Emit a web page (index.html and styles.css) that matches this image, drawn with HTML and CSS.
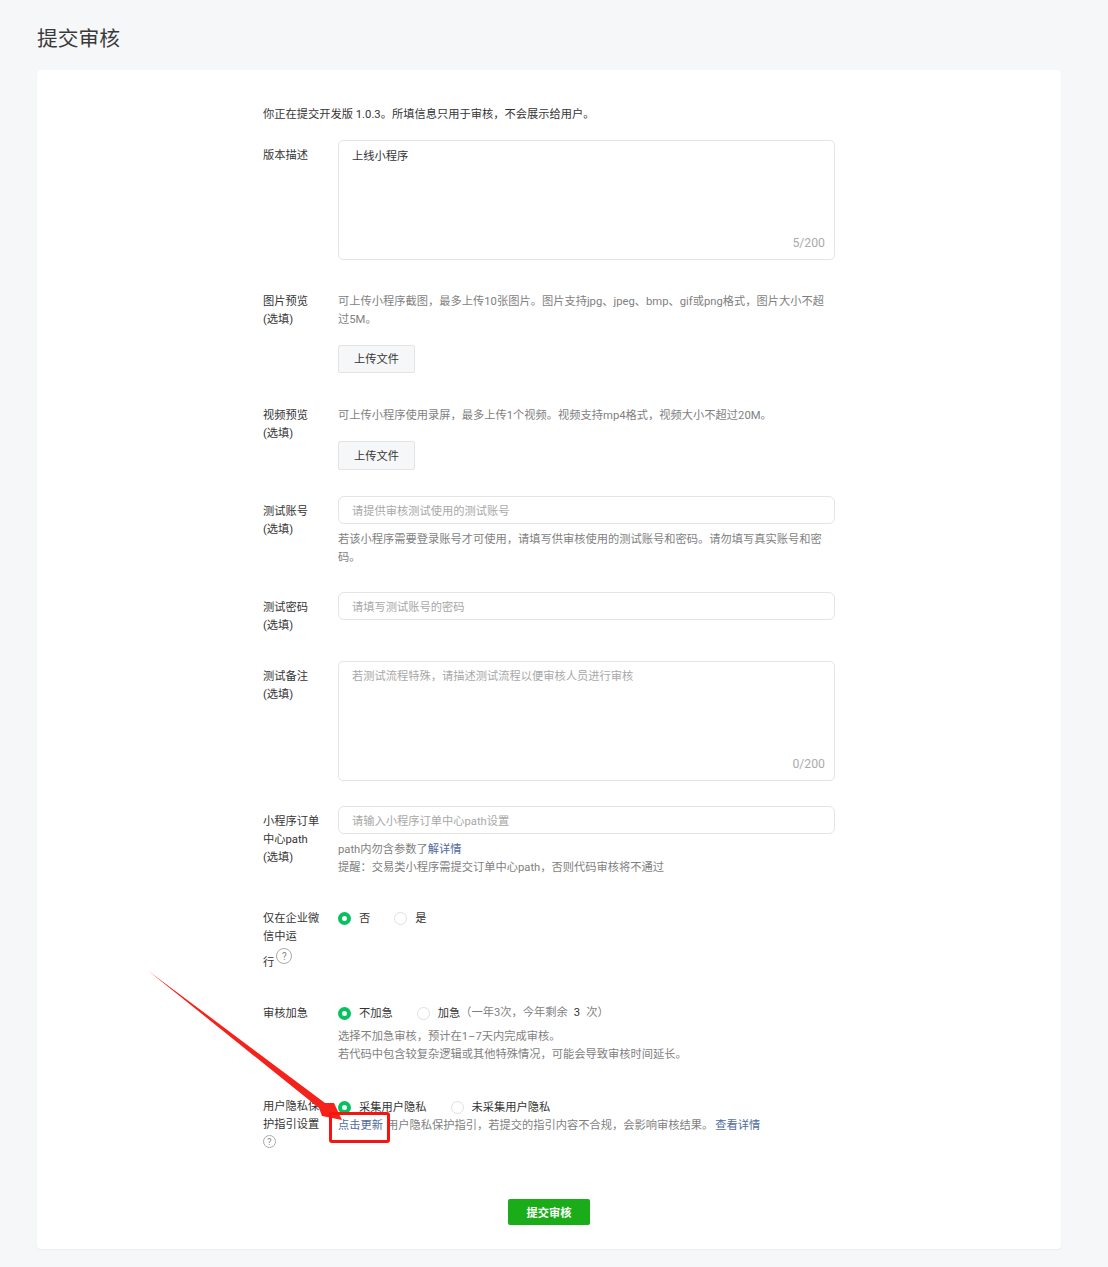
FILE: index.html
```html
<!DOCTYPE html>
<html lang="zh-CN">
<head>
    <meta charset="UTF-8">
    <title>提交审核</title>
    <link rel="stylesheet" href="styles.css">
</head>
<body>
    <h1 class="page-title">提交审核</h1>

    <div class="card">
        <form class="form">
            <p class="intro">你正在提交开发版 1.0.3。所填信息只用于审核，不会展示给用户。</p>

            <div class="row">
                <label class="label label-field">版本描述</label>
                <div class="control">
                    <div class="area-box">
                        <textarea class="area">上线小程序</textarea>
                        <span class="counter">5/200</span>
                    </div>
                </div>
            </div>

            <div class="row row-image">
                <label class="label">图片预览<br>(选填)</label>
                <div class="control">
                    <p class="hint">可上传小程序截图，最多上传10张图片。图片支持jpg、jpeg、bmp、gif或png格式，图片大小不超过5M。</p>
                    <button type="button" class="upload upload-image">上传文件</button>
                </div>
            </div>

            <div class="row row-tight">
                <label class="label">视频预览<br>(选填)</label>
                <div class="control">
                    <p class="hint">可上传小程序使用录屏，最多上传1个视频。视频支持mp4格式，视频大小不超过20M。</p>
                    <button type="button" class="upload upload-video">上传文件</button>
                </div>
            </div>

            <div class="row row-tight">
                <label class="label label-field">测试账号<br>(选填)</label>
                <div class="control">
                    <input class="input" type="text" placeholder="请提供审核测试使用的测试账号">
                    <p class="hint hint-below">若该小程序需要登录账号才可使用，请填写供审核使用的测试账号和密码。请勿填写真实账号和密码。</p>
                </div>
            </div>

            <div class="row row-password">
                <label class="label label-field">测试密码<br>(选填)</label>
                <div class="control">
                    <input class="input" type="text" placeholder="请填写测试账号的密码">
                </div>
            </div>

            <div class="row row-notes">
                <label class="label label-field">测试备注<br>(选填)</label>
                <div class="control">
                    <div class="area-box">
                        <textarea class="area area-notes" placeholder="若测试流程特殊，请描述测试流程以便审核人员进行审核"></textarea>
                        <span class="counter">0/200</span>
                    </div>
                </div>
            </div>

            <div class="row row-order">
                <label class="label label-field">小程序订单中心path<br>(选填)</label>
                <div class="control">
                    <input class="input" type="text" placeholder="请输入小程序订单中心path设置">
                    <p class="hint hint-below">path内勿含参数了<a class="link">解详情</a><br>提醒：交易类小程序需提交订单中心path，否则代码审核将不通过</p>
                </div>
            </div>

            <div class="row row-wework">
                <label class="label">仅在企业微信中运<span class="last-line">行<span class="help help-big">?</span></span></label>
                <div class="control">
                    <div class="radios">
                        <span class="radio radio-on"></span><span class="radio-text">否</span>
                        <span class="radio"></span><span class="radio-text">是</span>
                    </div>
                </div>
            </div>

            <div class="row row-speed">
                <label class="label">审核加急</label>
                <div class="control">
                    <div class="radios">
                        <span class="radio radio-on"></span><span class="radio-text">不加急</span>
                        <span class="radio"></span><span class="radio-text">加急<span class="quota">（一年3次，今年剩余<b class="quota-num">3</b>次）</span></span>
                    </div>
                    <p class="hint hint-radios">选择不加急审核，预计在1–7天内完成审核。<br>若代码中包含较复杂逻辑或其他特殊情况，可能会导致审核时间延长。</p>
                </div>
            </div>

            <div class="row row-privacy">
                <label class="label">用户隐私保护指引设置<span class="help">?</span></label>
                <div class="control control-privacy">
                    <div class="radios">
                        <span class="radio radio-on"></span><span class="radio-text">采集用户隐私</span>
                        <span class="radio"></span><span class="radio-text">未采集用户隐私</span>
                    </div>
                    <p class="hint"><a class="link link-update">点击更新</a>用户隐私保护指引，若提交的指引内容不合规，会影响审核结果。<a class="link link-more">查看详情</a></p>
                </div>
            </div>

            <div class="actions">
                <button type="button" class="submit">提交审核</button>
            </div>
        </form>

        <!-- annotation drawn over the form -->
        <svg class="arrow" width="200" height="150" viewBox="0 0 200 150">
            <path d="M-0.5 0 L176 132 L185 132 L193 149 L173 145 L170 137 Z" fill="#f5221b"/>
        </svg>
        <div class="mark"></div>
    </div>
</body>
</html>
```

FILE: styles.css
```css
* {
    box-sizing: border-box;
}
body {
    margin: 0;
    padding: 0 47px 18px 37px;
    background-color: #f6f7f9;
    color: #353535;
    font-family: Roboto, "Noto Sans CJK SC", sans-serif;
    font-size: 11.25px;
    line-height: 18px;
}
p {
    margin: 0;
}
.page-title {
    margin: 0;
    padding-top: 24px;
    height: 70px;
    font-size: 20.75px;
    line-height: 30px;
    font-weight: 400;
    color: #3a3a3a;
}
.card {
    position: relative;
    height: 1179px;
    background-color: #fff;
    border-radius: 4px;
    box-shadow: 0 1px 2px rgba(0,0,0,0.05);
    padding: 35px 0 0 226px;
}
.form {
    width: 572px;
}
.intro {
    padding-top: 1px;
    margin-bottom: 16px;
}
.row {
    display: flex;
    margin-bottom: 32px;
}
.label {
    flex: none;
    width: 75px;
    padding: 1px 18px 0 0;
}
.label-field {
    padding-top: 7px;
}
.control {
    flex: none;
    width: 497px;
}
.control-privacy {
    padding-top: 1px;
}
.hint {
    padding-top: 1px;
    margin-bottom: -1px;
    color: #7f7f7f;
}
.hint-below {
    margin-top: 6px;
}
.hint-radios {
    margin-top: 5px;
}
.link {
    color: #4f6a9e;
}
.link-update {
    margin-right: 4px;
}
.link-more {
    margin-left: 2px;
}
.area-box {
    position: relative;
    height: 120px;
}
.area {
    display: block;
    width: 100%;
    height: 100%;
    padding: 7px 13px;
    border: 1px solid #e4e4e4;
    border-radius: 5px;
    background: #fff;
    color: #353535;
    font: inherit;
    resize: none;
}
.area-notes {
    padding-top: 6px;
}
.area::placeholder,
.input::placeholder {
    color: #a8a8a8;
    opacity: 1;
}
.counter {
    position: absolute;
    right: 10px;
    bottom: 8px;
    color: #ababab;
    font-size: 12.25px;
}
.input {
    display: block;
    width: 100%;
    height: 28px;
    padding: 2px 13px 0;
    border: 1px solid #e4e4e4;
    border-radius: 6px;
    font: inherit;
    background: #fff;
}
.upload {
    display: block;
    width: 77px;
    height: 28px;
    padding: 2px 0 0;
    border: 1px solid #e4e4e4;
    border-radius: 2px;
    background-color: #f6f7f9;
    color: #353535;
    font: inherit;
}
.upload-image {
    margin-top: 17px;
}
.upload-video {
    margin-top: 17px;
    height: 29px;
}
.row-image {
    margin-bottom: 33px;
}
.row-tight {
    margin-bottom: 26px;
}
.row-password {
    margin-bottom: 26px;
}
.row-notes {
    margin-bottom: 25px;
}
.row-order {
    margin-bottom: 33px;
}
.row-wework {
    margin-bottom: 32px;
}
.row-speed {
    margin-bottom: 34px;
}
.row-privacy {
    margin-bottom: 51px;
}
.last-line {
    display: inline-block;
    margin-top: 2px;
    white-space: nowrap;
}
.help {
    display: block;
    width: 13px;
    height: 13px;
    margin-top: 1px;
    border: 1px solid #aaa;
    border-radius: 50%;
    color: #888;
    font-size: 9px;
    line-height: 12px;
    text-align: center;
}
.help-big {
    display: inline-block;
    width: 16px;
    height: 16px;
    margin: 0 0 0 2px;
    font-size: 10px;
    line-height: 15px;
    vertical-align: 6px;
}
.radios {
    display: flex;
    align-items: center;
    height: 18px;
}
.radio {
    flex: none;
    width: 13px;
    height: 13px;
    margin-right: 8px;
    border: 1px solid #e0e0e0;
    border-radius: 50%;
}
.radio-on {
    border: 4px solid #07c160;
}
.radio-text {
    padding-top: 1px;
    margin-right: 24px;
}
.quota {
    color: #7f7f7f;
    position: relative;
    top: -1px;
}
.quota-num {
    margin: 0 6px;
    font-weight: 400;
    color: #353535;
}
.actions {
    padding-left: 245px;
}
.submit {
    display: block;
    width: 82px;
    height: 26px;
    padding: 3px 0 0;
    border: none;
    border-radius: 2px;
    background-color: #1aad19;
    color: #fff;
    font: inherit;
    font-weight: 700;
}
.arrow {
    position: absolute;
    left: 112px;
    top: 901px;
    overflow: visible;
}
.mark {
    position: absolute;
    left: 292px;
    top: 1042px;
    width: 61px;
    height: 31px;
    border: 3px solid #f5140f;
    border-radius: 3px;
}
```
